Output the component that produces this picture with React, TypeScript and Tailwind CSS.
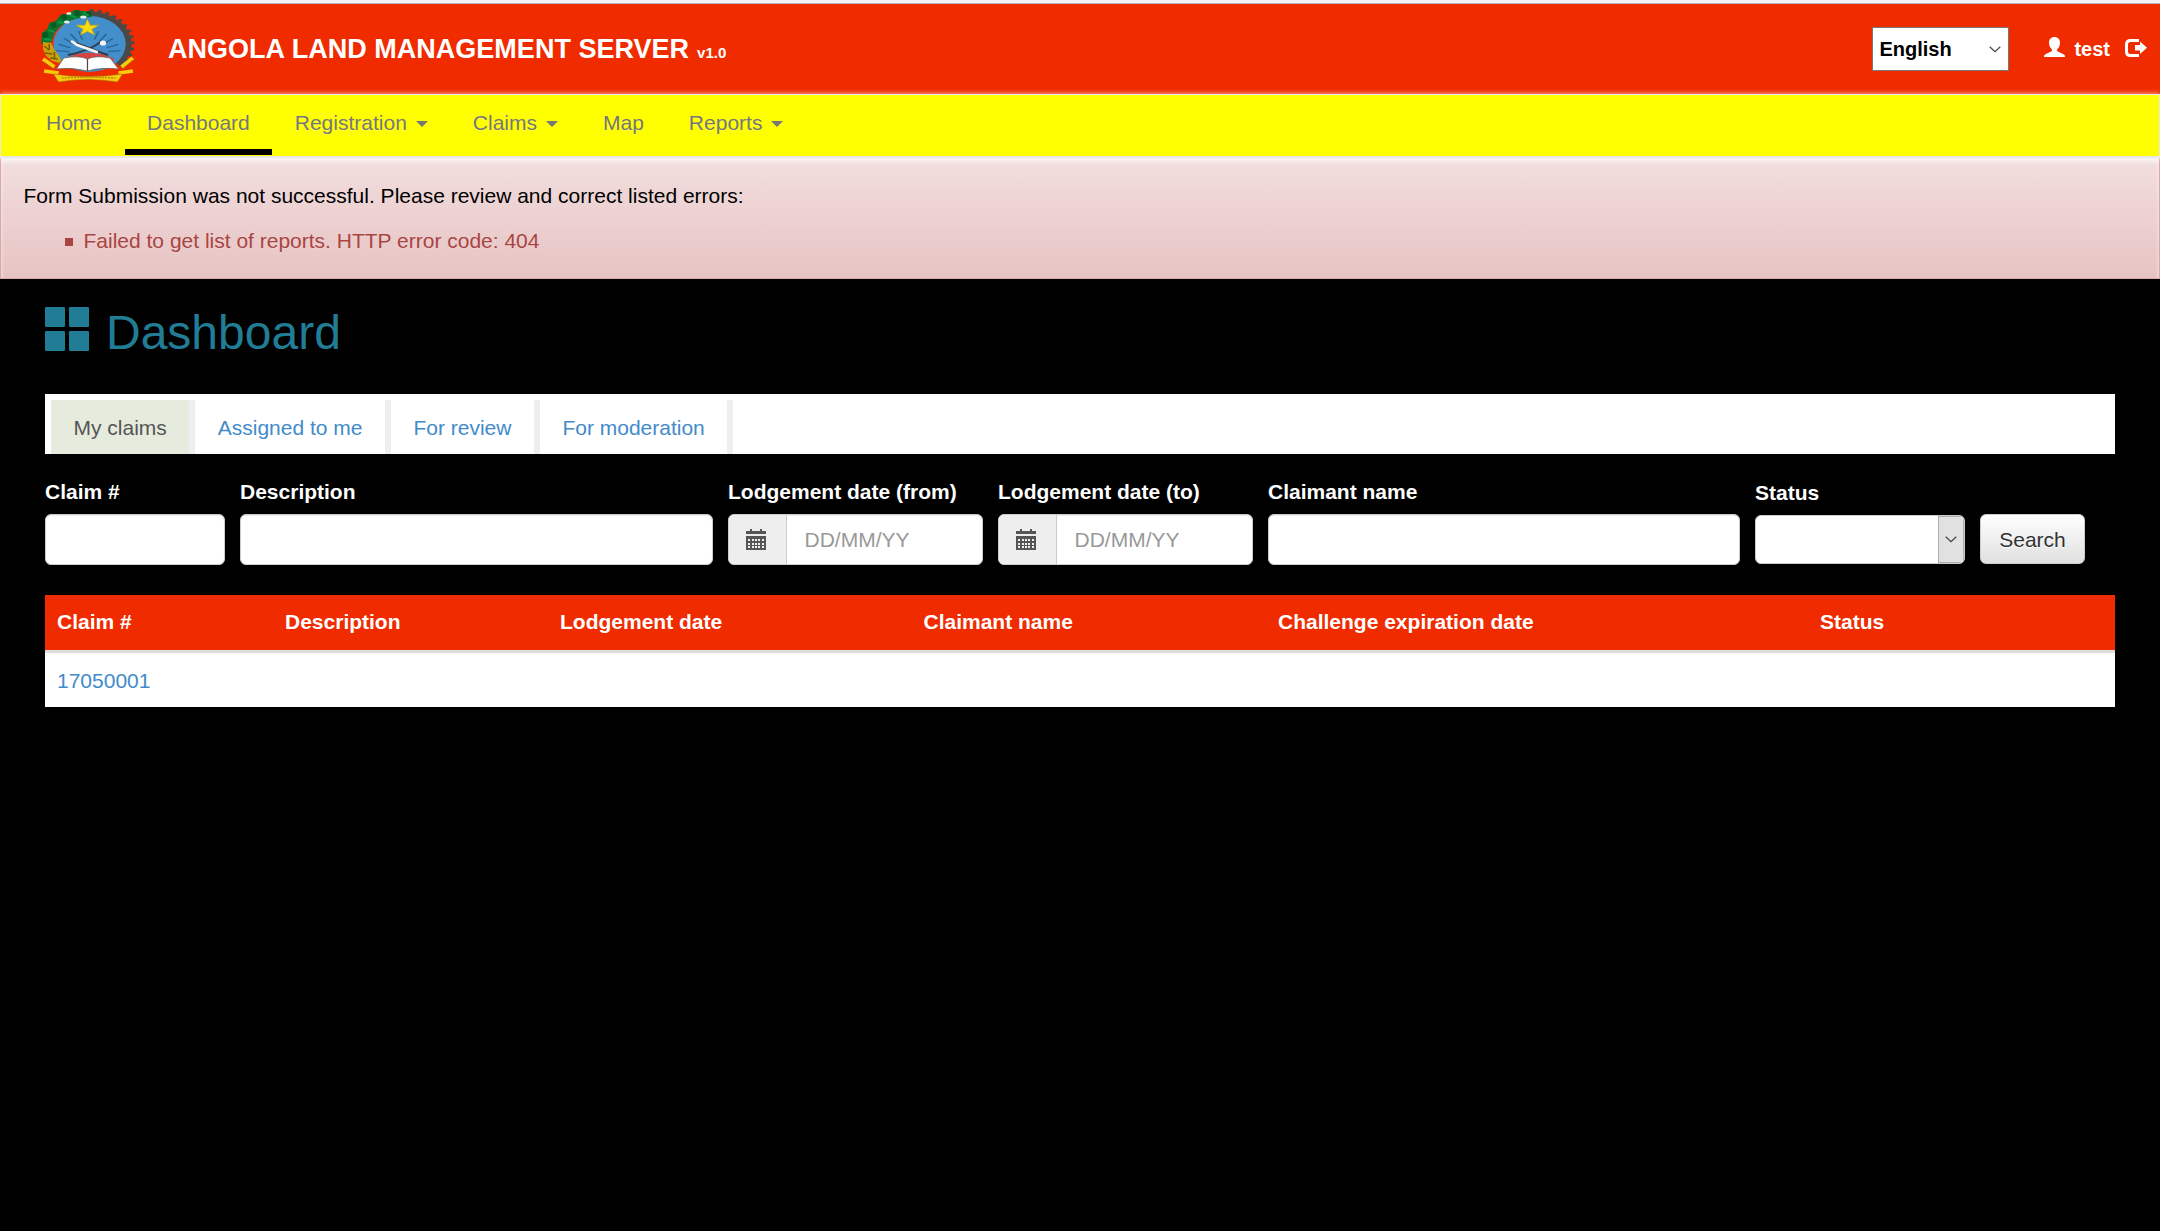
import React from "react";

function Caret() {
  return (
    <span className="ml-[9px] mt-[2px] h-0 w-0 border-x-[6px] border-t-[6px] border-x-transparent border-t-[#777]" />
  );
}

function Emblem() {
  const rays = [-84, -68, -50, -34, -18, 18, 34, 50, 68, 84];
  const teeth = Array.from({ length: 13 }, (_, i) => i * 10.5);
  return (
    <svg viewBox="1 0 91 74" preserveAspectRatio="none" className="h-[74px] w-[94px]">
      <g transform="translate(47 35) scale(1.27 1)">
        {teeth.map((a) => (
          <rect key={a} x="-1.500" y="-35" width="3" height="5" fill="#4b4848" transform={`rotate(${a + 4})`} />
        ))}
        <path d="M0 -29.500 A29.500 29.500 0 0 1 22 20" fill="none" stroke="#4b4848" strokeWidth="6" />
      </g>
      <ellipse cx="48" cy="35" rx="35" ry="28" fill="#438fcb" />
      <g transform="translate(47 44) scale(1.35 1)" stroke="#26659b" strokeWidth="1.200">
        {rays.map((a) => (
          <path key={a} d="M0 -14V-23" transform={`rotate(${a})`} />
        ))}
      </g>
      <path d="M1 35L2 24L7 20L9 14L15 12L20 6L28 5L33 1L42 2L50 3L50 8L38 9Q22 12 14 24L11 33Z" fill="#08762e" />
      <g fill="#075c25">
        <circle cx="5" cy="26" r="3" />
        <circle cx="13" cy="16" r="3" />
        <circle cx="23" cy="8" r="3" />
        <circle cx="36" cy="4" r="3" />
        <circle cx="47" cy="5" r="3" />
      </g>
      <path d="M4 30l7 1M8 21l6 2M17 13l6 1M29 6l6 3M42 3l5 4" stroke="#0b9b41" strokeWidth="1.800" />
      <g fill="#e5eeea">
        <ellipse cx="26" cy="13" rx="2.800" ry="1.500" />
        <ellipse cx="28" cy="4.500" rx="2.500" ry="1.300" />
        <ellipse cx="42" cy="8" rx="3" ry="1.500" />
      </g>
      <path d="M3 33l8 1 3 7 4 5 3 6-2 2-7-2-6-5-3-7z" fill="#c9a20b" />
      <path d="M4 37l5 4M5 44l7 1M10 49l7 1M9 35v6M14 43v7" stroke="#7d5b06" strokeWidth="1.500" />
      <path d="M22 51Q46 37 72 50L68 58H26Z" fill="#d84242" />
      <path d="M27 46Q48 42 60 32" fill="none" stroke="#343c49" strokeWidth="1.800" />
      <path d="M35 34L60 44L66 46" fill="none" stroke="#343c49" strokeWidth="2" />
      <path d="M31 32.500L36 36L55 43" fill="none" stroke="#f7f7f7" strokeWidth="2.600" strokeLinecap="round" />
      <ellipse cx="61" cy="34" rx="3" ry="2.600" fill="#f7f7f7" />
      <path d="M46 10l2.600 6.200H57l-6.800 4 2.800 5.800-7-3.500-7 3.500 2.800-5.800-6.800-4h8.400z" fill="#f7db10" stroke="#b99c12" strokeWidth=".6" />
      <path d="M23 49Q38 46 46 50Q54 46 68 49L76 60Q59 58 46 62Q31 58 16 60Z" fill="#fff" stroke="#676058" strokeWidth=".8" />
      <path d="M46 50V62" stroke="#4d4b49" strokeWidth="1.200" />
      <path d="M3 50l11 8M90 49l-11 9" stroke="#f6cc0b" strokeWidth="4" />
      <path d="M4 62l14 2M90 62l-14 2" stroke="#f6cc0b" strokeWidth="3.500" />
      <path d="M4 53l9 7M90 51l-10 9" stroke="#a66208" strokeWidth=".8" />
      <path d="M13 65Q45 70 80 65L75 73Q46 68 18 73Z" fill="#f6cc0b" stroke="#a66208" strokeWidth=".6" />
      <path d="M21 69Q46 67.500 73 69" fill="none" stroke="#bd8912" strokeWidth="1.500" strokeDasharray="2 1" />
    </svg>
  );
}

function Calendar() {
  return (
    <svg viewBox="0 0 20 21" className="h-[21px] w-5" shapeRendering="crispEdges">
      <path d="M0 2h4V0h2v2h8V0h2v2h4v3H0z" fill="#555" />
      <path d="M0 7h20v14H0z" fill="#555" />
      {[10, 14, 17].map((y) =>
        [2, 6, 9, 12, 16].map((x) => <rect key={`${x}-${y}`} x={x} y={y} width="2" height="2" fill="#eee" />)
      )}
    </svg>
  );
}

function Chevron() {
  return (
    <svg viewBox="0 0 12 7" className="h-[7px] w-3">
      <path d="M.7.7L6 5.700L11.300.7" fill="none" stroke="#444" strokeWidth="1.200" />
    </svg>
  );
}

const input =
  "h-[51px] rounded-[6px] border border-[#ccc] bg-white shadow-[inset_0_1px_1px_rgba(0,0,0,0.075)]";

function Field({ label, width, children }: { label: string; width: string; children?: React.ReactNode }) {
  return (
    <div className={`${width} mr-[15px] shrink-0`}>
      <div className="mb-[7px] h-[30px] whitespace-nowrap font-bold text-white">{label}</div>
      {children ?? <div className={input} />}
    </div>
  );
}

function DateInput() {
  return (
    <div className={`${input} flex overflow-hidden`}>
      <div className="flex w-[58px] items-center border-r border-[#ccc] bg-[#eee] pl-[17px] pb-px">
        <Calendar />
      </div>
      <div className="pl-[17.5px] pt-[10px] text-[#999]">DD/MM/YY</div>
    </div>
  );
}

const nav = [
  { text: "Home" },
  { text: "Dashboard", active: true },
  { text: "Registration", menu: true },
  { text: "Claims", menu: true },
  { text: "Map" },
  { text: "Reports", menu: true },
];

export default function App() {
  return (
    <div className="h-[1231px] w-[2160px] overflow-hidden bg-black font-['Liberation_Sans',Arial,sans-serif] text-[21px] leading-[30px]">
      <div className="h-1 border-b border-[#b9b9bb] bg-[#f4f4f6]" />
      <header className="flex h-[90px] bg-[#f02b00] text-white">
        <div className="ml-[41px] mt-[5px] w-[94px]">
          <Emblem />
        </div>
        <div className="ml-[33px] mt-[30px] flex items-baseline whitespace-nowrap font-bold">
          <span className="text-[27px] tracking-[0.02px]">ANGOLA LAND MANAGEMENT SERVER</span>
          <span className="ml-[8px] text-[15px]">v1.0</span>
        </div>
        <div className="ml-auto mt-[23px] flex h-11 w-[137px] items-center justify-between border border-[#777] bg-white pl-[6px] pr-[7px] font-bold text-black">
          <span className="text-[20px]">English</span>
          <Chevron />
        </div>
        <svg viewBox="0 0 21 20" className="ml-[35px] mt-[33px] h-5 w-[21px]" fill="#fff">
          <path d="M10.500 0C14 0 16 2.500 16 5.500C16 8.500 15 10.500 13 12.500V14L20 17.500C20.700 18 21 18.500 21 20H0C0 18.500 .3 18 1 17.500L8 14V12.500C6 10.500 5 8.500 5 5.500C5 2.500 7 0 10.500 0Z" />
        </svg>
        <span className="ml-[9px] mt-[30px] text-[20px] font-bold">test</span>
        <svg viewBox="0 0 22 18" className="ml-[15px] mr-[13px] mt-[35px] h-[18px] w-[22px]">
          <path d="M14 1.500H5.500Q1.500 1.500 1.500 5.500V12.500Q1.500 16.500 5.500 16.500H14" fill="none" stroke="#fff" strokeWidth="3" />
          <path d="M10 6h5V2.500L22 8.700L15 15V11.500H10Z" fill="#fff" />
        </svg>
      </header>
      <nav className="relative flex h-[64px] border border-b-2 border-[#e7e7e7] bg-[#ff0] pl-[22.5px] text-[#777] shadow-[0_0_5px_rgba(255,255,255,0.75)]">
        {nav.map((n) => (
          <div
            key={n.text}
            className={`flex h-[60px] items-center px-[22.5px] pb-[8px] pt-[4px] [text-shadow:0_1px_0_rgba(255,255,255,0.25)] ${n.active ? "shadow-[inset_0_-6px_0_#000]" : ""}`}
          >
            {n.text}
            {n.menu && <Caret />}
          </div>
        ))}
      </nav>
      <section className="h-[121px] border border-[#dca7a7] border-t-[#f5eeee] bg-linear-to-b from-[#f2dede] to-[#e7c3c3] pl-[22.5px] pt-[22px] shadow-[inset_0_3px_4px_rgba(255,255,255,0.6)]">
        <div className="text-black">Form Submission was not successful. Please review and correct listed errors:</div>
        <div className="mt-[15px] flex items-center pl-[41px] text-[#a94442] [text-shadow:0_1px_0_rgba(255,255,255,0.2)]">
          <span className="mr-[11px] mt-[2px] h-2 w-2 bg-[#a94442]" />
          Failed to get list of reports. HTTP error code: 404
        </div>
      </section>
      <main className="ml-[45px] w-[2070px]">
        <div className="flex h-[115px] pt-[28px] text-[#217d96]">
          <div className="grid h-[44px] w-[44px] grid-cols-2 gap-1">
            {[0, 1, 2, 3].map((i) => (
              <span key={i} className="rounded-[1px] bg-[#217d96]" />
            ))}
          </div>
          <h1 className="ml-[17px] mt-[-1px] text-[48px] leading-[54px]">Dashboard</h1>
        </div>
        <div className="flex h-[60px] bg-white pl-[6px] pt-[6px] text-[#428bca]">
          {["My claims", "Assigned to me", "For review", "For moderation"].map((t, i) => (
            <div
              key={t}
              className={`h-[54px] border-r-[6px] border-[#eee] px-[22.48px] pt-[13px] ${i === 0 ? "bg-[#e6ecdd] text-[#555]" : ""}`}
            >
              {t}
            </div>
          ))}
        </div>
        <div className="flex h-[141px] pt-[23px]">
          <Field label="Claim #" width="w-[180px]" />
          <Field label="Description" width="w-[473px]" />
          <Field label="Lodgement date (from)" width="w-[255px]">
            <DateInput />
          </Field>
          <Field label="Lodgement date (to)" width="w-[255px]">
            <DateInput />
          </Field>
          <Field label="Claimant name" width="w-[472px]" />
          <div className="mr-[15px] w-[210px] pt-px">
            <div className="mb-[7px] h-[30px] font-bold text-white">Status</div>
            <div className="flex h-[49px] justify-end overflow-hidden rounded-[6px] border border-[#ccc] bg-white">
              <div className="flex w-[26px] items-center justify-center border border-[#adadad] bg-[#e1e1e1] pr-px pb-px">
                <Chevron />
              </div>
            </div>
          </div>
          <div className="mt-[37px] h-[50px] w-[105px] rounded-[6px] border border-[#ccc] bg-linear-to-b from-white to-[#e0e0e0] pt-[10px] text-center text-[#333] [text-shadow:0_1px_0_#fff]">
            Search
          </div>
        </div>
        <div className="grid h-[58px] grid-cols-[228px_275px_363.5px_354.5px_542px_1fr] border-b-[3px] border-[#ddd] bg-[#f02b00] pt-[12px] font-bold text-white">
          {["Claim #", "Description", "Lodgement date", "Claimant name", "Challenge expiration date", "Status"].map((t) => (
            <div key={t} className="pl-3">
              {t}
            </div>
          ))}
        </div>
        <div className="h-[54px] bg-white pl-3 pt-[13px] text-[#428bca]">17050001</div>
      </main>
    </div>
  );
}
